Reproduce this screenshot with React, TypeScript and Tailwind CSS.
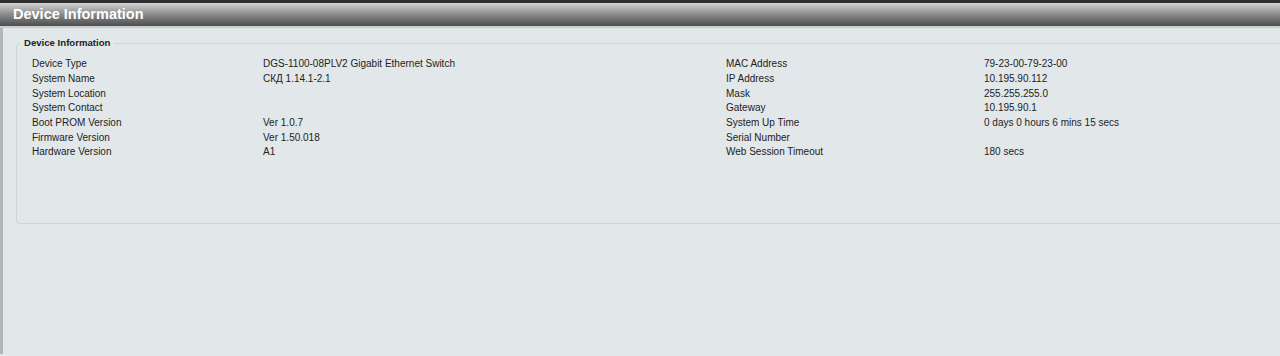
const left = [
  ["Device Type", "DGS-1100-08PLV2 Gigabit Ethernet Switch"],
  ["System Name", "СКД 1.14.1-2.1"],
  ["System Location", ""],
  ["System Contact", ""],
  ["Boot PROM Version", "Ver 1.0.7"],
  ["Firmware Version", "Ver 1.50.018"],
  ["Hardware Version", "A1"],
]

const right = [
  ["MAC Address", "79-23-00-79-23-00"],
  ["IP Address", "10.195.90.112"],
  ["Mask", "255.255.255.0"],
  ["Gateway", "10.195.90.1"],
  ["System Up Time", "0 days 0 hours 6 mins 15 secs"],
  ["Serial Number", ""],
  ["Web Session Timeout", "180 secs"],
]

export default function App() {
  return (
    <div className="h-[356px] w-[1280px] overflow-hidden bg-[#e2e8ea] font-['Liberation_Sans',Arial,sans-serif] text-[10px] text-[#222]">
      {/* title bar */}
      <div className="h-[3px] bg-[#2e2e2e]" />
      <div className="flex h-[25px] items-center bg-gradient-to-b from-[#d4d4d4] via-[#8a8a8a] to-[#4e4e4e] pl-[13px] border-b-[2px] border-[#c9cfd1]">
        <span className="text-[14.5px] font-bold leading-none text-white">Device Information</span>
      </div>

      <div className="h-[326px] border-l-[3px] border-[#b3b6b8] pl-[13px] pt-[8px]">
        <fieldset className="h-[188px] w-[1300px] rounded-[4px] border border-[#c9d5d7] pl-[15px] pt-[6px]">
          <legend className="-ml-[12px] px-[4px] font-bold text-[9.6px] text-[#222]">Device Information</legend>
          <div className="flex">
            <div className="flex flex-col">
              {left.map(([k, v]) => (
                <div key={k} className="flex h-[14.7px] items-center">
                  <span className="w-[231px]">{k}</span>
                  <span className="w-[463px]">{v}</span>
                </div>
              ))}
            </div>
            <div className="flex flex-col">
              {right.map(([k, v]) => (
                <div key={k} className="flex h-[14.7px] items-center">
                  <span className="w-[258px]">{k}</span>
                  <span>{v}</span>
                </div>
              ))}
            </div>
          </div>
        </fieldset>
      </div>
    </div>
  )
}
